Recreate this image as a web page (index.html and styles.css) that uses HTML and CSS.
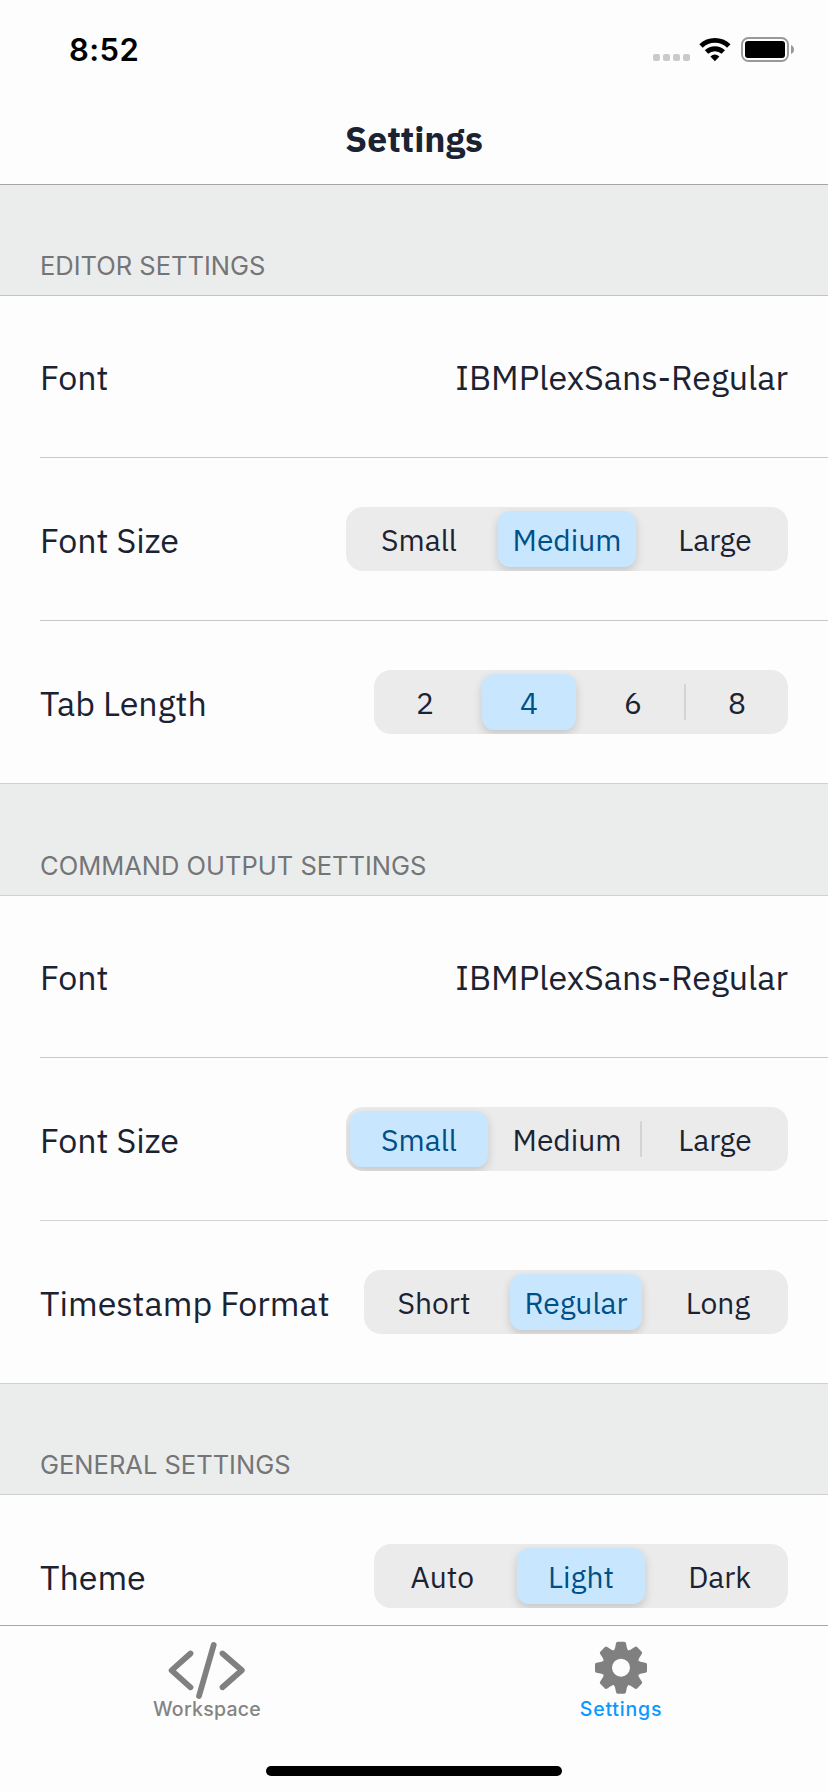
FILE: index.html
```html
<!DOCTYPE html>
<html lang="en">
<head>
<meta charset="utf-8">
<title>Settings</title>
<link rel="stylesheet" href="styles.css">
</head>
<body>
<div class="screen">
  <header class="nav">
    <div class="status">
      <span class="time">8:52</span>
      <div class="indicators">
        <div class="cell"><i></i><i></i><i></i><i></i></div>
        <svg class="wifi" width="32" height="25" viewBox="0 0 32 25">
          <g fill="none" stroke="#000" stroke-width="4.9">
            <path d="M2 9A20 20 0 0 1 29.8 9"/>
            <path d="M7.5 15A12.4 12.4 0 0 1 24.3 15"/>
          </g>
          <path d="M11.4 19.6Q15.9 15.6 20.4 19.6L15.9 24.2Z"/>
        </svg>
        <svg class="battery" width="53" height="25" viewBox="0 0 53 25">
          <rect x="1" y="1" width="46" height="23" rx="6.5" fill="none" stroke="#999" stroke-width="1.9"/>
          <rect x="4" y="4" width="40" height="17" rx="3" fill="#000"/>
          <path d="M50 8Q53 9.5 53 12.5T50 17Z" fill="#999"/>
        </svg>
      </div>
    </div>
    <h1 class="title">Settings</h1>
  </header>

  <main class="content">
    <section>
      <h2 class="section-title first">EDITOR SETTINGS</h2>
      <div class="row font"><span class="label">Font</span><span class="label">IBMPlexSans-Regular</span></div>
      <div class="row mid"><span class="label">Font Size</span>
        <div class="segmented w-size"><span>Small</span><b></b><span class="on">Medium</span><b></b><span>Large</span></div>
      </div>
      <div class="row last"><span class="label">Tab Length</span>
        <div class="segmented w-tab"><span>2</span><b></b><span class="on">4</span><b></b><span>6</span><b class="line"></b><span>8</span></div>
      </div>
    </section>
    <section>
      <h2 class="section-title">COMMAND OUTPUT SETTINGS</h2>
      <div class="row font"><span class="label">Font</span><span class="label">IBMPlexSans-Regular</span></div>
      <div class="row mid soft"><span class="label">Font Size</span>
        <div class="segmented w-size"><span class="on">Small</span><b></b><span>Medium</span><b class="line"></b><span>Large</span></div>
      </div>
      <div class="row last"><span class="label">Timestamp Format</span>
        <div class="segmented w-stamp"><span>Short</span><b></b><span class="on">Regular</span><b></b><span>Long</span></div>
      </div>
    </section>
    <section>
      <h2 class="section-title third">GENERAL SETTINGS</h2>
      <div class="row last"><span class="label">Theme</span>
        <div class="segmented w-tab"><span>Auto</span><b></b><span class="on">Light</span><b></b><span>Dark</span></div>
      </div>
    </section>
  </main>

  <nav class="tabbar">
    <div class="tabs">
      <div class="tab">
        <svg width="80" height="57" viewBox="0 0 80 57">
          <g fill="none" stroke="#808080" stroke-width="5.8" stroke-linecap="round" stroke-linejoin="round">
            <path d="M23.5 13.5L4.6 30.3L23.5 47.3"/>
            <path d="M46.7 5L32 56"/>
            <path d="M55.5 13.5L74.8 30.3L55.5 47.3"/>
          </g>
        </svg>
        <span class="tab-label">Workspace</span>
      </div>
      <div class="tab active">
        <svg width="80" height="57" viewBox="-40 -27.7 80 57">
          <defs><path id="tooth" d="M-9-15Q-6.6-17.6-6-19.5L-5-24.4Q-4.7-26-3.3-26H3.3Q4.7-26 5-24.4L6-19.5Q6.6-17.6 9-15Z"/></defs>
          <g fill="#808080">
            <use href="#tooth"/><use href="#tooth" transform="rotate(45)"/><use href="#tooth" transform="rotate(90)"/><use href="#tooth" transform="rotate(135)"/>
            <use href="#tooth" transform="rotate(180)"/><use href="#tooth" transform="rotate(225)"/><use href="#tooth" transform="rotate(270)"/><use href="#tooth" transform="rotate(315)"/>
          </g>
          <circle r="13.4" fill="none" stroke="#808080" stroke-width="8.8"/>
        </svg>
        <span class="tab-label">Settings</span>
      </div>
    </div>
    <div class="home"></div>
  </nav>
</div>
</body>
</html>
```
FILE: styles.css
```css
* { box-sizing: border-box; }
body { margin: 0; background: #fdfdfd; }
.screen {
  width: 828px; height: 1792px; display: flex; flex-direction: column;
  overflow: hidden; background: #fdfdfd; color: #1b2333;
  font-family: "IBM Plex Sans", "Open Sans", sans-serif;
}

/* Navigation bar */
.nav { height: 185px; flex: none; border-bottom: 1px solid #a5a5a5; }
.status { height: 99px; padding: 0 34px 0 69px; display: flex; justify-content: space-between; align-items: center; }
.time { font: 600 31px/40px Inter, sans-serif; letter-spacing: 0.4px; color: #000; }
.indicators { display: flex; align-items: flex-end; }
.cell { display: flex; gap: 3px; padding-bottom: 1px; margin-right: 9px; }
.cell i { width: 7px; height: 7px; border-radius: 2px; background: #cacaca; }
.wifi { margin-right: 10px; }
.wifi, .battery { display: block; }
.title { margin: 20px 0 0; font-size: 35.5px; line-height: 40px; font-weight: 700; text-align: center; }

/* Settings list */
.content { flex: 1; min-height: 0; overflow: hidden; }
.section-title {
  margin: 0; height: 113px; padding: 0 40px 14px; display: flex; align-items: flex-end;
  background: #ebedec; border-top: 1px solid #d0d1d1; border-bottom: 1px solid #d0d1d1;
  font: 400 25.5px/30px Inter, sans-serif; color: #747578;
}
.section-title.first { height: 111px; border-top: 0; border-bottom-color: #c2c3c4; }
.section-title.third { height: 112px; }
.row {
  height: 162px; margin-left: 40px; padding-right: 40px; border-bottom: 1px solid #c8c8ca;
  display: flex; justify-content: space-between; align-items: center;
}
.row.mid { height: 163px; }
.row.soft { border-bottom-color: #d2d2d3; }
.row.last { border-bottom: 0; }
.label { padding-top: 2px; font-size: 34px; line-height: 44px; white-space: nowrap; }
.font .label { padding-top: 0; }

/* Segmented control */
.segmented {
  height: 64px; padding: 4px; border-radius: 17px; background: #ebebeb; overflow: hidden;
  display: flex; align-items: center; font-size: 30px; line-height: 58px; text-align: center;
}
.segmented span { flex: 1 1 0; height: 56px; border-radius: 12px; white-space: nowrap; }
.segmented .on { background: #c8e7ff; color: #004f87; box-shadow: 0 4px 10px rgba(0, 0, 0, 0.16); }
.segmented b { flex: none; width: 2px; height: 36px; margin: 0 4px; border-radius: 1px; }
.segmented .line { background: #d3d3d4; }
.w-size { width: 442px; }
.w-tab { width: 414px; }
.w-stamp { width: 424px; }

/* Tab bar */
.tabbar {
  height: 167px; flex: none; border-top: 1px solid #a9a9a9; padding: 14px 0 16px;
  display: flex; flex-direction: column; justify-content: space-between; align-items: center;
}
.tabs { width: 100%; display: grid; grid-template-columns: 1fr 1fr; }
.tab { display: flex; flex-direction: column; align-items: center; }
.tab svg { display: block; overflow: visible; }
.tab-label { font: 500 19.5px/24px Inter, sans-serif; letter-spacing: 0.25px; color: #848484; }
.active .tab-label { color: #0a99ff; letter-spacing: 0.8px; }
.home { width: 296px; height: 10px; border-radius: 5px; background: #000; }
```
